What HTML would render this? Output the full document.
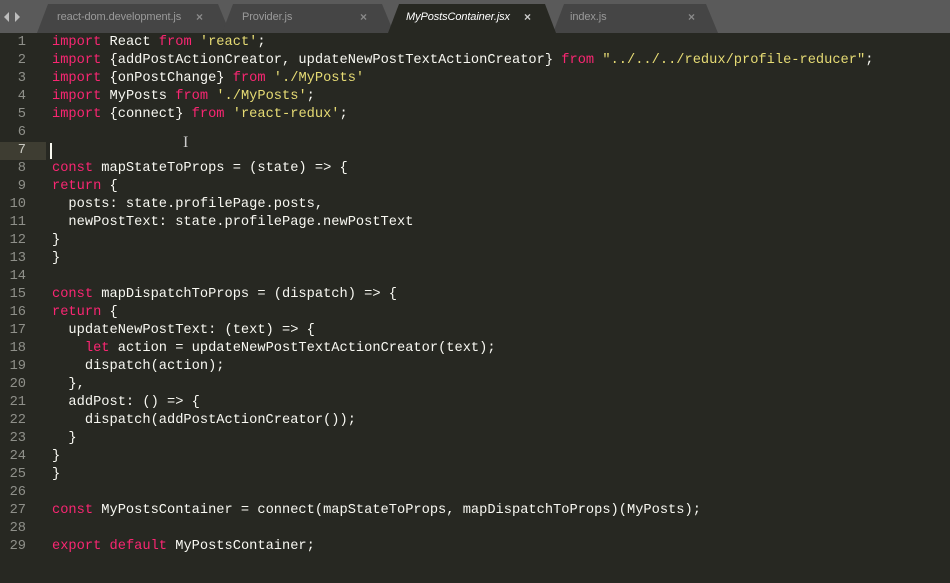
<!DOCTYPE html>
<html><head><style>
body{margin:0;width:950px;height:583px;background:#272822;overflow:hidden;position:relative;font-family:"Liberation Mono",monospace}
#bar{position:absolute;left:0;top:0;width:950px;height:33px;background:#5a5a5a}
.tt{position:absolute;top:11px;font:11px "Liberation Sans",sans-serif;color:#9a9a9a;letter-spacing:-0.1px}
.x{position:absolute;top:10px;font:bold 12px "Liberation Sans",sans-serif;color:#8a8a8a}
#code{position:absolute;left:0;top:34px;width:950px}
.l{height:18px;line-height:18px;font-size:13.7px;white-space:pre;color:#f8f8f2;position:relative}
.n{position:absolute;left:0;width:26px;text-align:right;color:#8f908a}
.c{position:absolute;left:52px}
.k{color:#f92672}.s{color:#e6db74}
</style></head><body>
<div id="bar"></div>
<svg width="950" height="33" style="position:absolute;left:0;top:0">
<polygon points="4,17 9,12 9,22" fill="#bdbdbd"/>
<polygon points="15,12 20,17 15,22" fill="#bdbdbd"/>
<polygon points="37,33 48,4 218,4 230,33" fill="#454545"/>
<polygon points="222,33 233,4 382,4 394,33" fill="#454545"/>
<polygon points="553,33 564,4 706,4 718,33" fill="#454545"/>
<polygon points="388,33 399,4 545,4 556,33" fill="#272822"/>
</svg>
<div class="tt" style="left:57px">react-dom.development.js</div><div class="x" style="left:196px">×</div>
<div class="tt" style="left:242px">Provider.js</div><div class="x" style="left:360px">×</div>
<div class="tt" style="left:406px;color:#fff;font-style:italic">MyPostsContainer.jsx</div><div class="x" style="left:524px;color:#ccc">×</div>
<div class="tt" style="left:570px">index.js</div><div class="x" style="left:688px">×</div>
<div style="position:absolute;left:0;top:142px;width:46px;height:18px;background:#3e3d32"></div>
<div style="position:absolute;left:50px;top:143px;width:2px;height:16px;background:#f8f8f0"></div>
<div style="position:absolute;left:183px;top:134px;font:16px 'Liberation Serif';color:#ccc">I</div>
<div id="code">
<div class="l"><span class="n">1</span><span class="c"><span class="k">import</span> React <span class="k">from</span> <span class="s">'react'</span>;</span></div>
<div class="l"><span class="n">2</span><span class="c"><span class="k">import</span> {addPostActionCreator, updateNewPostTextActionCreator} <span class="k">from</span> <span class="s">"../../../redux/profile-reducer"</span>;</span></div>
<div class="l"><span class="n">3</span><span class="c"><span class="k">import</span> {onPostChange} <span class="k">from</span> <span class="s">'./MyPosts'</span></span></div>
<div class="l"><span class="n">4</span><span class="c"><span class="k">import</span> MyPosts <span class="k">from</span> <span class="s">'./MyPosts'</span>;</span></div>
<div class="l"><span class="n">5</span><span class="c"><span class="k">import</span> {connect} <span class="k">from</span> <span class="s">'react-redux'</span>;</span></div>
<div class="l"><span class="n">6</span></div>
<div class="l"><span class="n" style="color:#c8c8c0">7</span></div>
<div class="l"><span class="n">8</span><span class="c"><span class="k">const</span> mapStateToProps = (state) => {</span></div>
<div class="l"><span class="n">9</span><span class="c"><span class="k">return</span> {</span></div>
<div class="l"><span class="n">10</span><span class="c">  posts: state.profilePage.posts,</span></div>
<div class="l"><span class="n">11</span><span class="c">  newPostText: state.profilePage.newPostText</span></div>
<div class="l"><span class="n">12</span><span class="c">}</span></div>
<div class="l"><span class="n">13</span><span class="c">}</span></div>
<div class="l"><span class="n">14</span></div>
<div class="l"><span class="n">15</span><span class="c"><span class="k">const</span> mapDispatchToProps = (dispatch) => {</span></div>
<div class="l"><span class="n">16</span><span class="c"><span class="k">return</span> {</span></div>
<div class="l"><span class="n">17</span><span class="c">  updateNewPostText: (text) => {</span></div>
<div class="l"><span class="n">18</span><span class="c">    <span class="k">let</span> action = updateNewPostTextActionCreator(text);</span></div>
<div class="l"><span class="n">19</span><span class="c">    dispatch(action);</span></div>
<div class="l"><span class="n">20</span><span class="c">  },</span></div>
<div class="l"><span class="n">21</span><span class="c">  addPost: () => {</span></div>
<div class="l"><span class="n">22</span><span class="c">    dispatch(addPostActionCreator());</span></div>
<div class="l"><span class="n">23</span><span class="c">  }</span></div>
<div class="l"><span class="n">24</span><span class="c">}</span></div>
<div class="l"><span class="n">25</span><span class="c">}</span></div>
<div class="l"><span class="n">26</span></div>
<div class="l"><span class="n">27</span><span class="c"><span class="k">const</span> MyPostsContainer = connect(mapStateToProps, mapDispatchToProps)(MyPosts);</span></div>
<div class="l"><span class="n">28</span></div>
<div class="l"><span class="n">29</span><span class="c"><span class="k">export</span> <span class="k">default</span> MyPostsContainer;</span></div>
</div>
</body></html>
